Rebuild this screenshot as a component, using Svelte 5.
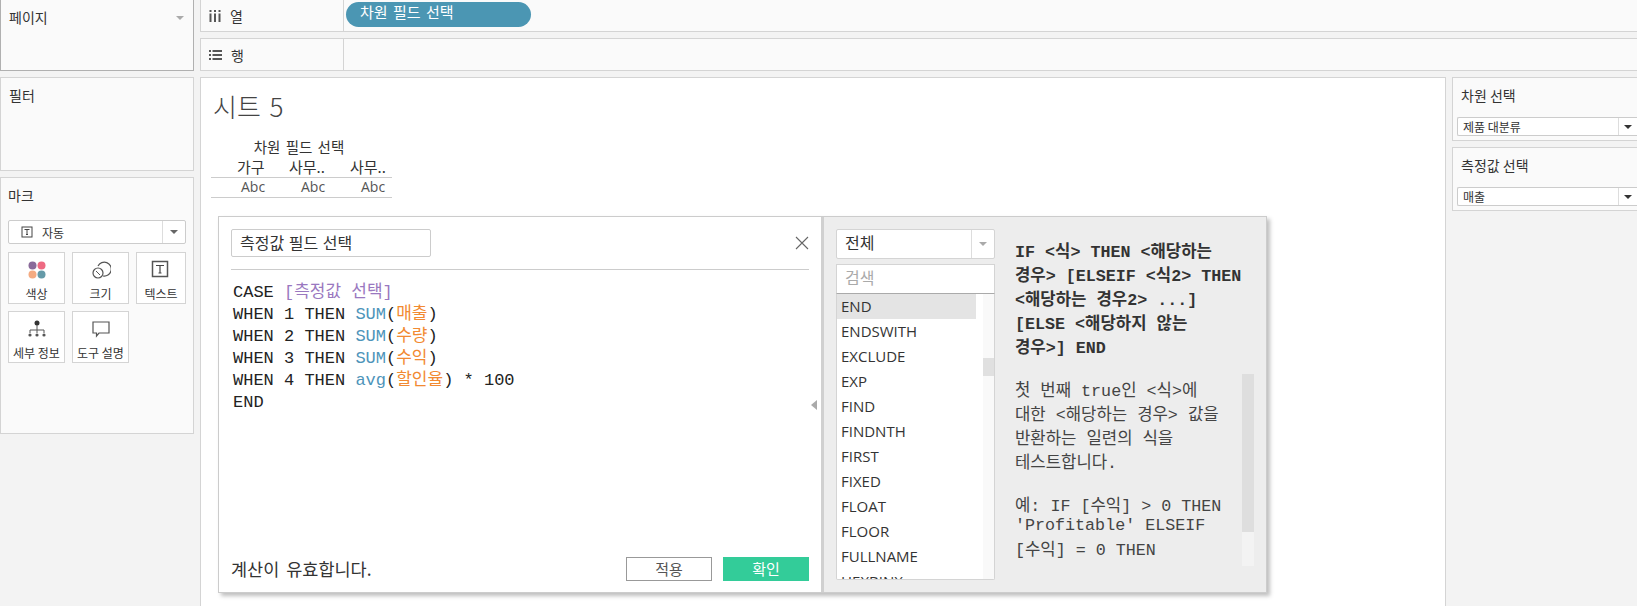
<script>
	const tools = [
		{ label: '색상', icon: 'color' },
		{ label: '크기', icon: 'size' },
		{ label: '텍스트', icon: 'text' },
		{ label: '세부 정보', icon: 'detail' },
		{ label: '도구 설명', icon: 'tooltip' }
	]

	const functions = ['END', 'ENDSWITH', 'EXCLUDE', 'EXP', 'FIND', 'FINDNTH', 'FIRST', 'FIXED', 'FLOAT', 'FLOOR', 'FULLNAME', 'HEXBINX']

	const syntax = [
		'IF <식> THEN <해당하는',
		'경우> [ELSEIF <식2> THEN',
		'<해당하는 경우2> ...]',
		'[ELSE <해당하지 않는',
		'경우>] END'
	]

	const about = ['첫 번째 true인 <식>에', '대한 <해당하는 경우> 값을', '반환하는 일련의 식을', '테스트합니다.']
	const cols = ['가구', '사무..', '사무..']
	const whenRows = [
		{ n: 1, fn: 'SUM', field: '매출', tail: '' },
		{ n: 2, fn: 'SUM', field: '수량', tail: '' },
		{ n: 3, fn: 'SUM', field: '수익', tail: '' },
		{ n: 4, fn: 'avg', field: '할인율', tail: ' * 100' }
	]
</script>

<div class="page">
	<aside class="left">
		<section class="card pages">
			<h3>페이지</h3>
			<span class="caret light"></span>
		</section>
		<section class="card filters"><h3>필터</h3></section>
		<section class="card marks">
			<h3>마크</h3>
			<div class="mark-type">
				<div class="mark-name">
					<svg width="12" height="12" viewBox="0 0 12 12"><rect x="1" y="1" width="10" height="10" fill="none" stroke="#444"/><path d="M3.5 3.5h5M6 3.5v5M5 8.5h2" fill="none" stroke="#444"/></svg>
					<span>자동</span>
				</div>
				<div class="mark-arrow"><span class="caret"></span></div>
			</div>
			<div class="tools">
				{#each tools as t}
					<div class="tool">
						<svg width="20" height="20" viewBox="0 0 20 20">
							{#if t.icon === 'color'}
								<circle cx="5.5" cy="5.5" r="4" fill="#8a6a9a"/>
								<circle cx="14.5" cy="5.5" r="4" fill="#ee6a82"/>
								<circle cx="5.5" cy="14.5" r="4" fill="#f4ab82"/>
								<circle cx="14.5" cy="14.5" r="4" fill="#659aa8"/>
							{:else if t.icon === 'size'}
								<path d="M7 6a7 7 0 1 1 5 10" fill="none" stroke="#555" stroke-width="1.2"/>
								<circle cx="7" cy="13" r="5" fill="none" stroke="#555" stroke-width="1.2"/>
								<path d="M5 11l4 4" stroke="#555"/>
							{:else if t.icon === 'text'}
								<rect x="1.500" y="1.500" width="15" height="15" fill="none" stroke="#555" stroke-width="1.5"/>
								<path d="M5 5.500h8M9 5.500v7.500M7.500 13h3" fill="none" stroke="#444" stroke-width="1.200"/>
							{:else if t.icon === 'detail'}
								<circle cx="10" cy="4" r="2.500" fill="#333"/>
								<path d="M10 6v8M3 11h14M3 11v3M17 11v3" fill="none" stroke="#555"/>
								<circle cx="3" cy="16" r="1.600" fill="#555"/>
								<circle cx="10" cy="16" r="1.600" fill="#555"/>
								<circle cx="17" cy="16" r="1.600" fill="#555"/>
							{:else}
								<path d="M2 3h16v11H8l-2.500 3v-3H2z" fill="none" stroke="#555" stroke-width="1.200"/>
							{/if}
						</svg>
						<span>{t.label}</span>
					</div>
				{/each}
			</div>
		</section>
	</aside>

	<div class="shelves">
		<div class="shelf cols">
			<div class="shelf-label">
				<svg width="12" height="12" viewBox="0 0 12 12"><path d="M1.500 0v2M6 0v2M10.500 0v2M1.500 3.500V12M6 3.500V12M10.500 3.500V12" stroke="#555" stroke-width="2"/></svg>
				<span>열</span>
			</div>
			<div class="shelf-body"><span class="pill">차원 필드 선택</span></div>
		</div>
		<div class="shelf rows">
			<div class="shelf-label">
				<svg width="13" height="12" viewBox="0 0 13 12"><path d="M0 2h2M3.500 2H13M0 6h2M3.500 6H13M0 10h2M3.500 10H13" stroke="#555" stroke-width="2"/></svg>
				<span>행</span>
			</div>
			<div class="shelf-body"></div>
		</div>
	</div>

	<main class="sheet">
		<h1>시트 5</h1>
		<div class="viz">
			<div class="viz-title">차원 필드 선택</div>
			<div class="viz-row heads">
				{#each cols as c}<span>{c}</span>{/each}
			</div>
			<div class="viz-row cells">
				{#each cols as c}<span>Abc</span>{/each}
			</div>
		</div>

		<div class="dialog">
			<div class="editor">
				<div class="editor-head">
					<div class="name">측정값 필드 선택</div>
					<svg class="close" width="14" height="14" viewBox="0 0 14 14"><path d="M1 1l12 12M13 1L1 13" stroke="#666" stroke-width="1.100"/></svg>
				</div>
				<div class="code">
					<div>CASE <span class="param">[측정값 선택]</span></div>
					{#each whenRows as r}
						<div>WHEN {r.n} THEN <span class="fn">{r.fn}</span>(<span class="field">{r.field}</span>){r.tail}</div>
					{/each}
					<div>END</div>
				</div>
				<span class="collapse"></span>
				<div class="editor-foot">
					<span class="status">계산이 유효합니다.</span>
					<button class="btn">적용</button>
					<button class="btn ok">확인</button>
				</div>
			</div>

			<div class="help">
				<div class="picker">
					<div class="select">
						<span class="select-name">전체</span>
						<div class="select-arrow"><span class="caret light"></span></div>
					</div>
					<div class="search">검색</div>
					<div class="list">
						<div class="items">
							{#each functions as f, i}
								<div class="item" class:active={i === 0}>{f}</div>
							{/each}
						</div>
						<div class="track"><div class="thumb"></div></div>
					</div>
				</div>
				<div class="doc">
					<div class="syntax">
						{#each syntax as line}<div>{line}</div>{/each}
					</div>
					<div class="about">
						<div class="about-text">
							{#each about as line}<div>{line}</div>{/each}
							<div class="example">
								<div>예: IF [수익] &gt; 0 THEN</div>
								<div class="ex-b">'Profitable' ELSEIF</div>
								<div>[수익] = 0 THEN</div>
								<div class="ex-last">'Breakeven' ELSE</div>
							</div>
						</div>
						<div class="doc-track"><div class="doc-thumb"></div></div>
					</div>
				</div>
			</div>
		</div>
	</main>

	<aside class="right">
		<section class="card param-card">
			<h3>차원 선택</h3>
			<div class="param-select"><span class="param-name">제품 대분류</span><div class="param-arrow"><span class="caret dark"></span></div></div>
		</section>
		<section class="card param-card">
			<h3>측정값 선택</h3>
			<div class="param-select"><span class="param-name">매출</span><div class="param-arrow"><span class="caret dark"></span></div></div>
		</section>
	</aside>
</div>

<style>
:global(body) {
	margin: 0;
	background: #f3f3f3;
}

.page {
	display: grid;
	grid-template-columns: 194px 1fr 185px;
	grid-template-rows: 71px 1fr;
	column-gap: 6px;
	row-gap: 6px;
	height: 606px;
	overflow: hidden;
	color: #333;
	font-family: "Noto Sans CJK KR", "Open Sans", sans-serif;
	font-size: 14px;
}

.card {
	box-sizing: border-box;
	background: #fafafa;
	border: 1px solid #d4d4d4;
	position: relative;
}

h3 {
	margin: 0;
	font-size: 14px;
	font-weight: 400;
	line-height: 20px;
}

.caret {
	display: inline-block;
	width: 0;
	height: 0;
	border-left: 4px solid transparent;
	border-right: 4px solid transparent;
	border-top: 4px solid #666;
}

.caret.light {
	border-top-color: #aaa;
}

.caret.dark {
	border-top-color: #333;
}

.left {
	grid-row: 1 / 3;
	display: flex;
	flex-direction: column;
	gap: 6px;
}

.pages {
	height: 71px;
	border: 1px solid #b0b0b0;
	border-top: 0;
	padding: 7px 8px;
}

.pages .caret {
	position: absolute;
	right: 9px;
	top: 16px;
}

.filters {
	height: 94px;
	padding: 7px 8px;
}

.marks {
	height: 257px;
	padding: 7px 7px;
}

.mark-type {
	display: flex;
	height: 24px;
	margin-top: 15px;
	box-sizing: border-box;
	background: #fff;
	border: 1px solid #ccc;
	border-radius: 2px;
	font-size: 12px;
}

.mark-name {
	flex: 1;
	display: flex;
	align-items: center;
	gap: 9px;
	padding-left: 12px;
}

.mark-arrow {
	width: 22px;
	border-left: 1px solid #ddd;
	display: flex;
	align-items: center;
	justify-content: center;
}

.tools {
	display: grid;
	grid-template-columns: 57px 57px 50px;
	gap: 7px;
	margin-top: 8px;
}

.tool {
	box-sizing: border-box;
	height: 52px;
	background: #fff;
	border: 1px solid #d4d4d4;
	display: flex;
	flex-direction: column;
	align-items: center;
	padding-top: 7px;
	gap: 6px;
	font-size: 12px;
	line-height: 16px;
	white-space: nowrap;
}

.shelves {
	grid-column: 2 / 4;
	display: flex;
	flex-direction: column;
	gap: 6px;
}

.shelf {
	display: flex;
	box-sizing: border-box;
	border: 1px solid #d4d4d4;
	border-right: 0;
	background: #fafafa;
}

.shelf.cols {
	height: 32px;
	border-top: 0;
}

.shelf.rows {
	height: 33px;
}

.shelf-label {
	width: 143px;
	box-sizing: border-box;
	border-right: 1px solid #d4d4d4;
	display: flex;
	align-items: center;
	gap: 9px;
	padding-left: 8px;
}

.shelf-body {
	flex: 1;
	padding: 2px 2px;
}

.pill {
	display: block;
	box-sizing: border-box;
	width: 185px;
	height: 25px;
	padding-left: 14px;
	border-radius: 13px;
	background: #4b96b3;
	color: #fff;
	font-size: 15px;
	word-spacing: 2px;
	line-height: 20px;
}

.sheet {
	position: relative;
	box-sizing: border-box;
	background: #fff;
	border: 1px solid #d4d4d4;
	border-bottom: 0;
	padding: 11px 10px;
	min-height: 0;
}

h1 {
	margin: 0 0 0 2px;
	font-size: 26px;
	font-weight: 300;
	word-spacing: 3px;
	line-height: 34px;
	color: #444;
}

.viz {
	width: 181px;
	margin-top: 15px;
	font-size: 14px;
	line-height: 18px;
}

.viz-title {
	text-align: center;
	padding-right: 5px;
	font-size: 14.5px;
	word-spacing: 2px;
}

.viz-row {
	display: grid;
	grid-template-columns: 60px 60px 60px;
	padding-left: 26px;
}

.viz-row.heads {
	grid-template-columns: 52px 61px 60px;
	height: 19px;
	border-bottom: 1px solid #ccc;
	margin-top: 2px;
	font-size: 15px;
	line-height: 17px;
}

.viz-row.cells {
	height: 19px;
	padding-left: 30px;
	border-bottom: 1px solid #ccc;
	font-family: "Open Sans", sans-serif;
	color: #555;
	font-size: 14px;
	line-height: 17px;
}

.dialog {
	position: absolute;
	left: 17px;
	top: 138px;
	width: 1049px;
	height: 377px;
	box-sizing: border-box;
	display: flex;
	background: #fff;
	border: 1px solid #ccc;
	box-shadow: 3px 3px 4px rgba(0, 0, 0, .25);
}

.editor {
	position: relative;
	width: 602px;
	box-sizing: border-box;
	display: flex;
	flex-direction: column;
	padding: 12px 12px 11px 12px;
}

.editor-head {
	display: flex;
	align-items: center;
	justify-content: space-between;
	padding: 0 0 12px;
	height: 28px;
	border-bottom: 1px solid #ccc;
}

.name {
	box-sizing: border-box;
	width: 200px;
	height: 28px;
	border: 1px solid #ccc;
	border-radius: 2px;
	padding-left: 8px;
	font-size: 16px;
	word-spacing: 1px;
	line-height: 25px;
}

.code {
	flex: 1;
	padding: 12px 2px 0;
	font-family: "Liberation Mono", "Noto Sans CJK KR", monospace;
	font-size: 17px;
	line-height: 22px;
	color: #222;
	white-space: nowrap;
}

.param {
	color: #9a78c0;
}

.fn {
	color: #4d94ba;
}

.field {
	color: #f28a32;
}

.collapse {
	position: absolute;
	right: 4px;
	top: 183px;
	border-top: 5px solid transparent;
	border-bottom: 5px solid transparent;
	border-right: 6px solid #aaa;
}

.editor-foot {
	display: flex;
	align-items: center;
	gap: 11px;
}

.status {
	flex: 1;
	font-size: 17.5px;
	word-spacing: 3px;
	color: #333;
}

.btn {
	box-sizing: border-box;
	width: 86px;
	height: 24px;
	padding: 0;
	border: 1px solid #999;
	background: #fff;
	color: #555;
	font: inherit;
	font-size: 15px;
	line-height: 20px;
}

.btn.ok {
	border: 0;
	background: #33cc99;
	color: #fff;
}

.help {
	flex: 1;
	min-width: 0;
	display: flex;
	box-sizing: border-box;
	background: #ededed;
	border-left: 3px solid #d0d0d0;
	padding: 12px 12px 12px 12px;
}

.picker {
	width: 159px;
	flex: none;
	display: flex;
	flex-direction: column;
}

.select {
	box-sizing: border-box;
	height: 30px;
	display: flex;
	align-items: center;
	background: #fff;
	border: 1px solid #d4d4d4;
	border-radius: 2px;
	padding-left: 8px;
	font-size: 16px;
}

.select-name {
	flex: 1;
	line-height: 24px;
	margin-top: -4px;
}

.select-arrow {
	width: 22px;
	height: 100%;
	border-left: 1px solid #ddd;
	display: flex;
	align-items: center;
	justify-content: center;
}

.search {
	box-sizing: border-box;
	height: 30px;
	margin-top: 5px;
	background: #fff;
	border: 1px solid #d4d4d4;
	border-bottom-color: #aaa;
	padding-left: 8px;
	font-size: 16px;
	line-height: 25px;
	color: #aaa;
}

.list {
	flex: 1;
	min-height: 0;
	display: flex;
	overflow: hidden;
	background: #fff;
	border: 1px solid #d4d4d4;
	border-top: 0;
	border-radius: 0 0 2px 2px;
}

.items {
	width: 139px;
	flex: none;
	margin-right: 7px;
	font-family: "Open Sans", sans-serif;
	font-size: 15px;
}

.item {
	height: 25px;
	line-height: 25px;
	padding-left: 4px;
	color: #333;
}

.item.active {
	background: #e4e4e4;
}

.track {
	flex: 1;
	background: #f9f9f9;
	padding-top: 64px;
}

.thumb {
	height: 18px;
	background: #e0e0e0;
}

.doc {
	flex: 1;
	min-width: 0;
	padding-left: 20px;
	font-family: "Liberation Mono", "Noto Sans CJK KR", monospace;
	font-size: 16.7px;
	color: #444;
	white-space: nowrap;
}

.syntax {
	margin-top: 12px;
	font-weight: 700;
	line-height: 24px;
	color: #333;
}

.about {
	display: flex;
	height: 192px;
	margin-top: 13px;
	overflow: hidden;
}

.about-text {
	flex: 1;
	overflow: hidden;
	padding-top: 6px;
	line-height: 24px;
}

.example {
	margin-top: 21px;
	line-height: 19px;
}

.ex-b {
	margin-bottom: 6px;
}

.ex-last {
	margin-top: 6px;
}

.doc-track {
	width: 12px;
	background: #f3f3f3;
}

.doc-thumb {
	height: 158px;
	background: #dedede;
}

.right {
	display: flex;
	flex-direction: column;
	gap: 6px;
}

.param-card {
	height: 64px;
	border-right: 0;
	padding: 7px 0 0 4px;
}

.param-card h3 {
	padding-left: 4px;
}

.param-select {
	display: flex;
	align-items: center;
	box-sizing: border-box;
	height: 19px;
	margin-top: 12px;
	background: #fff;
	border: 1px solid #ccc;
	border-right: 0;
	border-radius: 2px 0 0 2px;
	padding-left: 5px;
	font-size: 12px;
}

.param-name {
	flex: 1;
}

.param-arrow {
	width: 18px;
	height: 100%;
	border-left: 1px solid #ddd;
	display: flex;
	align-items: center;
	justify-content: center;
}
</style>
